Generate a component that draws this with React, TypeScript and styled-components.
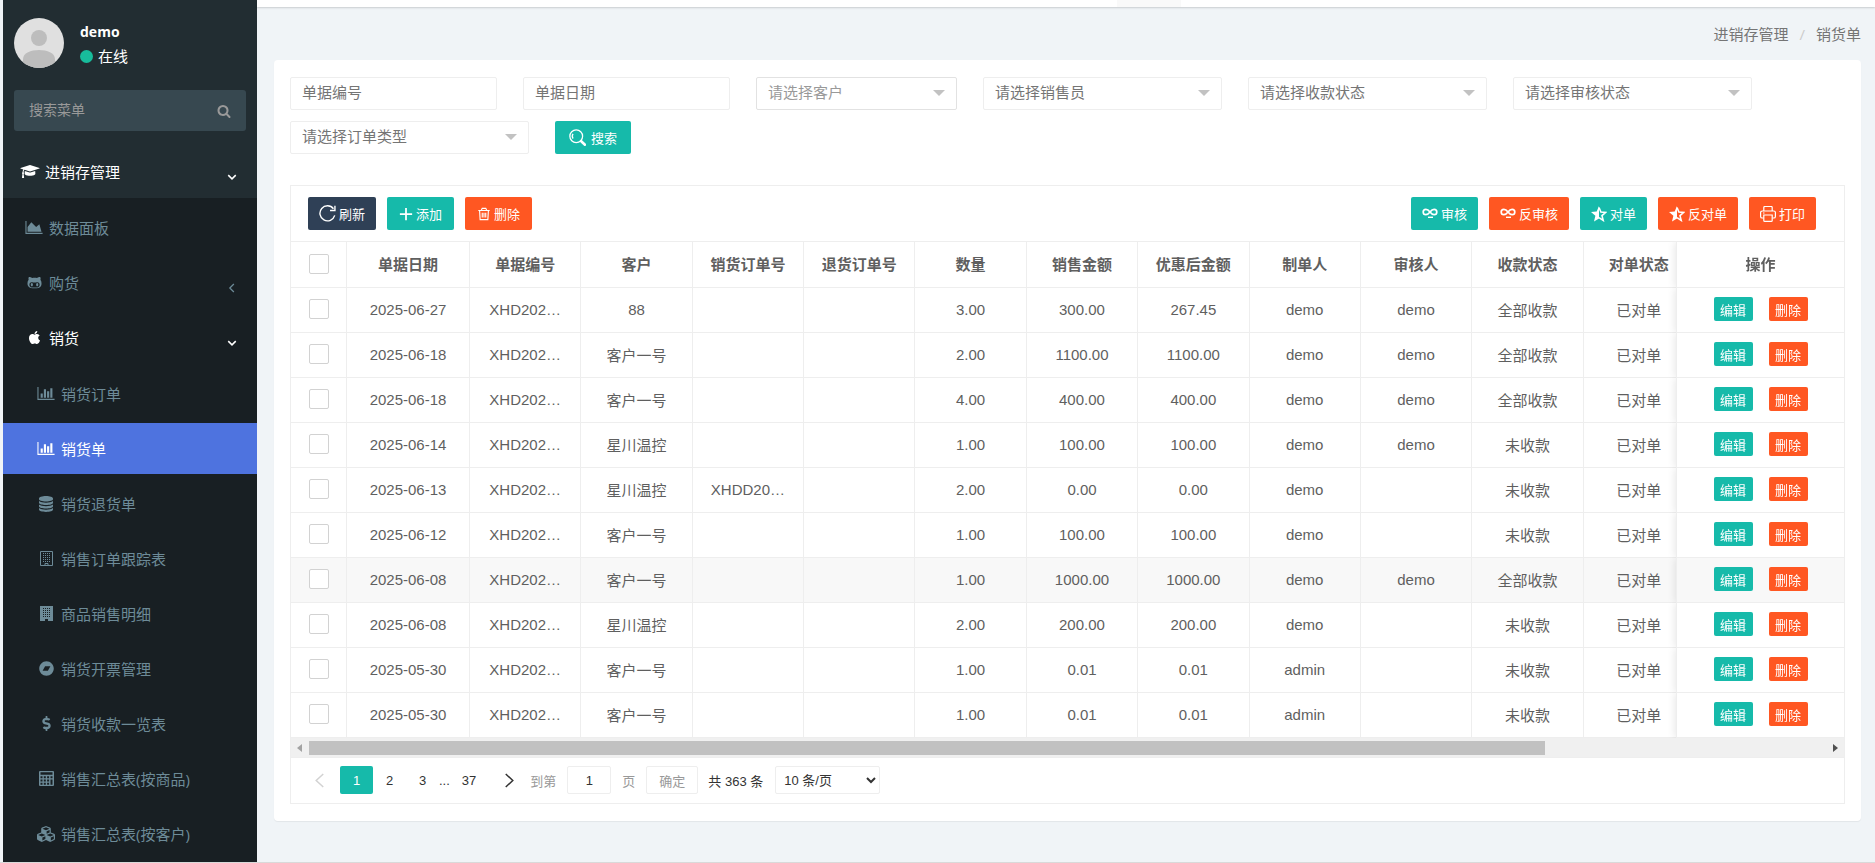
import React from "react";
import styled, { createGlobalStyle, css } from "styled-components";
import { FaApple, FaBandcamp, FaCubes, FaDollarSign, FaGithubAlt } from "react-icons/fa";

const cjk = `"Noto Sans CJK SC", sans-serif`;
const uiFont = `"Open Sans", ${cjk}`;
const dataFont = `"Liberation Sans", ${cjk}`;

const color = {
  teal: "#16baaa",
  orange: "#ff5722",
  navy: "#2f4056",
  line: "#eeeeee",
  text: "#5f5f5f",
  muted: "#757575",
};

const GlobalStyle = createGlobalStyle`
  *, *::before, *::after { box-sizing: border-box; }
  body { margin: 0; background: #f0f4f7; font-family: ${dataFont}; font-size: 15px; color: ${color.text}; }
  button, input, select { font: inherit; margin: 0; }
  a { color: inherit; text-decoration: none; }
`;

/* ---------- page frame ---------- */

const Shell = styled.div`
  display: flex;
  min-height: 100vh;
  padding-left: 3px;
  border-bottom: 1px solid #d9d9d9;
`;

const Sidebar = styled.aside`
  display: flex;
  flex-direction: column;
  flex: 0 0 254px;
  background: #222d32;
  color: #fff;
  font-family: ${uiFont};
`;

const Main = styled.main`
  flex: 1;
  min-width: 0;
`;

const TopStrip = styled.div`
  display: flex;
  height: 7px;
  padding-left: 860px;
  background: #fff;
  box-shadow: 0 1px 2px rgba(0, 0, 0, 0.16);
`;

const TopTab = styled.span`
  width: 64px;
  background: #f9f9f9;
`;

/* ---------- sidebar ---------- */

const UserPanel = styled.div`
  display: flex;
  gap: 16px;
  padding: 18px 11px 22px;
`;

const UserInfo = styled.div`
  display: flex;
  flex-direction: column;
  gap: 4px;
  padding-top: 4px;
  line-height: 20px;
`;

const UserName = styled.strong`
  font-size: 14px;
`;

const Status = styled.span`
  display: flex;
  align-items: center;
  gap: 5px;
  font-size: 15px;
  &::before {
    content: "";
    width: 13px;
    height: 13px;
    border-radius: 50%;
    background: #18bc9c;
  }
`;

const MenuSearch = styled.form`
  display: flex;
  align-items: center;
  height: 41px;
  margin: 0 11px 16px;
  padding: 0 15px;
  border-radius: 3px;
  background: #374850;
`;

const MenuSearchInput = styled.input`
  flex: 1;
  min-width: 0;
  padding: 0 0 2px;
  border: 0;
  outline: 0;
  background: none;
  color: #fff;
  font-size: 14px;
  &::placeholder { color: #999; }
`;

const IconButton = styled.button`
  display: flex;
  padding: 0;
  border: 0;
  background: none;
  color: #999;
`;

const SubMenu = styled.ul`
  display: flex;
  flex: 1;
  flex-direction: column;
  gap: 4px;
  margin: 0;
  padding: 5px 0 0;
  list-style: none;
  background: #181f23;
`;

const MenuLink = styled.a<{ $level?: number; $tone?: "open" | "active" }>`
  display: flex;
  align-items: center;
  gap: 5px;
  height: 51px;
  padding: 0 20px ${(p) => (p.$level === 2 ? 0 : 2)}px ${(p) => [17, 21, 33][p.$level ?? 0]}px;
  color: ${(p) => (p.$tone ? "#fff" : "#6d8b98")};
  background: ${(p) => (p.$tone === "active" ? "#4e73df" : "transparent")};
  font-size: 15px;
  line-height: 20px;
`;

const MenuIcon = styled.span`
  display: flex;
  justify-content: center;
  width: 20px;
`;

const MenuArrow = styled.span`
  display: flex;
  margin-left: auto;
  padding-top: 10px;
`;

/* ---------- content ---------- */

const Breadcrumb = styled.nav`
  display: flex;
  justify-content: flex-end;
  align-items: center;
  gap: 11px;
  height: 53px;
  padding: 0 14px;
  color: ${color.muted};
  font-family: ${uiFont};
`;

const Slash = styled.span`
  color: #ccc;
`;

const Card = styled.section`
  margin: 0 14px 0 17px;
  padding: 17px 16px;
  border-radius: 4px;
  background: #fff;
  box-shadow: 0 1px 1px rgba(0, 0, 0, 0.06);
`;

const Filters = styled.form`
  display: flex;
  flex-wrap: wrap;
  gap: 11px 26px;
  margin-bottom: 31px;
`;

const field = css`
  height: 33px;
  padding: 0 11px 2px;
  border: 1px solid ${color.line};
  border-radius: 2px;
  background: #fff;
  outline: 0;
`;

const FilterInput = styled.input`
  ${field}
  width: 207px;
  &::placeholder { color: ${color.muted}; }
`;

const SelectWrap = styled.span<{ $narrow?: boolean }>`
  position: relative;
  width: ${(p) => (p.$narrow ? 201 : 239)}px;
  &::after {
    content: "";
    position: absolute;
    top: 13px;
    right: 12px;
    border: 6px solid transparent;
    border-top-color: #c2c2c2;
    border-bottom: 0;
    pointer-events: none;
  }
`;

const FilterSelect = styled.select<{ $pale?: boolean }>`
  ${field}
  appearance: none;
  width: 100%;
  border-color: ${(p) => (p.$pale ? "#e2e2e2" : color.line)};
  color: ${(p) => (p.$pale ? "#999" : color.muted)};
`;

const Button = styled.button<{ $bg: string; $wide?: boolean }>`
  display: flex;
  align-items: center;
  justify-content: center;
  gap: ${(p) => (p.$wide ? 5 : 3)}px;
  height: 33px;
  min-width: 67px;
  padding: 0 ${(p) => (p.$wide ? 14 : 11)}px;
  border: 0;
  border-radius: 2px;
  background: ${(p) => p.$bg};
  color: #fff;
  font-size: 13px;
  white-space: nowrap;
`;

const TableFrame = styled.div`
  border: 1px solid ${color.line};
`;

const Toolbar = styled.div`
  display: flex;
  justify-content: space-between;
  padding: 11px 28px 11px 17px;
  border-bottom: 1px solid ${color.line};
`;

const ButtonGroup = styled.div`
  display: flex;
  gap: 11px;
`;

const TableScroll = styled.div`
  overflow: hidden;
`;

const Table = styled.table`
  width: 100%;
  min-width: 1572px;
  table-layout: fixed;
  border-collapse: separate;
  border-spacing: 0;
`;

const Col = styled.col<{ $w?: number }>`
  width: ${(p) => (p.$w ? `${p.$w}px` : "auto")};
`;

const cell = css<{ $pinned?: boolean }>`
  padding: 0 16px 2px;
  border-right: 1px solid ${color.line};
  border-bottom: 1px solid ${color.line};
  background: inherit;
  text-align: center;
  white-space: nowrap;
  ${(p) =>
    p.$pinned &&
    css`
      position: sticky;
      right: 0;
      border-left: 1px solid ${color.line};
      border-right: 0;
      box-shadow: -1px 0 8px rgba(0, 0, 0, 0.1);
      clip-path: inset(0 0 0 -10px);
    `}
`;

const Th = styled.th<{ $pinned?: boolean }>`
  ${cell}
  height: 46px;
  font-weight: 700;
`;

const Td = styled.td<{ $pinned?: boolean }>`
  ${cell}
  height: 45px;
`;

const Tr = styled.tr<{ $hover?: boolean }>`
  background: ${(p) => (p.$hover ? "#f8f8f8" : "#fff")};
`;

const Checkbox = styled.input.attrs({ type: "checkbox" })`
  appearance: none;
  display: block;
  width: 20px;
  height: 20px;
  margin: 0 auto;
  border: 1px solid #d2d2d2;
  border-radius: 2px;
  background: #fff;
`;

const RowActions = styled.div`
  display: flex;
  justify-content: center;
  gap: 16px;
`;

const SmallButton = styled.button<{ $bg: string }>`
  width: 39px;
  height: 24px;
  padding: 0;
  border: 0;
  border-radius: 2px;
  background: ${(p) => p.$bg};
  color: #fff;
  font-size: 13px;
`;

const ScrollBar = styled.div`
  display: flex;
  align-items: center;
  gap: 7px;
  height: 20px;
  padding: 0 6px;
  border-bottom: 1px solid ${color.line};
  background: #f0f0f0;
`;

const ScrollTrack = styled.div`
  flex: 1;
`;

const ScrollThumb = styled.div`
  width: calc(100% - 281px);
  height: 14px;
  background: #c1c1c1;
`;

const ScrollArrow = styled.span<{ $dir: "left" | "right" }>`
  border: 4px solid transparent;
  ${(p) =>
    p.$dir === "left"
      ? "border-right: 5px solid #a3a3a3; border-left: 0;"
      : "border-left: 5px solid #505050; border-right: 0;"}
`;

const Pager = styled.nav`
  display: flex;
  align-items: center;
  padding: 8px 7px 9px;
  color: #333;
  font-size: 13px;
`;

const PageButton = styled.button<{ $current?: boolean; $arrow?: boolean; $off?: boolean }>`
  display: flex;
  align-items: center;
  justify-content: center;
  height: 28px;
  min-width: ${(p) => (p.$arrow ? 42 : 33)}px;
  padding: 0 12px;
  border: 0;
  border-radius: 2px;
  background: ${(p) => (p.$current ? color.teal : "none")};
  color: ${(p) => (p.$current ? "#fff" : p.$off ? "#d2d2d2" : "#333")};
`;

const PagerHint = styled.label`
  display: flex;
  align-items: center;
  gap: 11px;
  color: #999;
`;

const PagerInput = styled.input`
  width: 44px;
  height: 28px;
  padding: 0;
  border: 1px solid ${color.line};
  border-radius: 2px;
  color: #333;
  text-align: center;
`;

const PagerConfirm = styled.button`
  height: 28px;
  margin: 0 10px 0 11px;
  padding: 0 12px;
  border: 1px solid ${color.line};
  border-radius: 2px;
  background: #fff;
  color: #999;
`;

const PagerSelect = styled.select`
  width: 105px;
  height: 28px;
  margin-left: 12px;
  padding: 0 4px;
  border: 1px solid ${color.line};
  border-radius: 2px;
  background: #fff;
  color: #333;
`;

/* ---------- icons ---------- */

const Avatar = () => (
  <svg width="50" height="50" viewBox="0 0 50 50" role="img" aria-label="demo">
    <defs>
      <clipPath id="avatar-clip"><circle cx="25" cy="25" r="25" /></clipPath>
    </defs>
    <g clipPath="url(#avatar-clip)">
      <rect width="50" height="50" fill="#e0e0e0" />
      <circle cx="25" cy="20" r="8" fill="#bdbdbd" />
      <path d="M9 50V41c0-6 8-9 16-9s16 3 16 9v9z" fill="#bdbdbd" />
    </g>
  </svg>
);

const Glyph = ({ w, h, box, d }: { w: number; h: number; box: string; d: string }) => (
  <svg width={w} height={h} viewBox={box} fill="currentColor" aria-hidden="true">
    <path d={d} />
  </svg>
);

const SearchGlyph = () => (
  <Glyph w={14} h={14} box="0 0 1792 1792" d="M1216 832q0-185-131.5-316.5t-316.5-131.5-316.5 131.5-131.5 316.5 131.5 316.5 316.5 131.5 316.5-131.5 131.5-316.5zm512 832q0 52-38 90t-90 38q-54 0-90-38l-343-342q-179 124-399 124-143 0-273.5-55.5t-225-150-150-225-55.5-273.5 55.5-273.5 150-225 225-150 273.5-55.5 273.5 55.5 225 150 150 225 55.5 273.5q0 220-124 399l343 343q37 37 37 90z" />
);
const CapGlyph = () => (
  <Glyph w={20} h={15} box="0 0 2304 1792" d="M1774 836l18 316q4 69-82 128t-235 93.5-323 34.5-323-34.5-235-93.5-82-128l18-316 574 181q22 7 48 7t48-7zm530-324q0 23-22 31l-1120 352q-4 1-10 1t-10-1l-652-206q-43 34-71 111.5t-34 178.5q63 36 63 109 0 69-58 107l58 433q2 14-8 25-9 11-24 11h-192q-15 0-24-11-10-11-8-25l58-433q-58-38-58-107 0-73 65-111 11-207 98-330l-333-104q-22-8-22-31t22-31l1120-352q4-1 10-1t10 1l1120 352q22 8 22 31z" />
);
const AreaGlyph = () => (
  <Glyph w={18} h={15} box="0 0 2048 1792" d="M2048 1536v128h-2048v-1536h128v1408h1920zm-384-1024l256 896h-1664v-576l448-576 576 576z" />
);
const BarGlyph = () => (
  <Glyph w={18} h={15} box="0 0 2048 1792" d="M640 896v512h-256v-512h256zm384-512v1024h-256v-1024h256zm1024 1152v128h-2048v-1536h128v1408h1920zm-640-896v768h-256v-768h256zm384-384v1152h-256v-1152h256z" />
);
const DatabaseGlyph = () => (
  <Glyph w={14} h={16} box="0 0 14 16" d="M0 2.4C0 1 3 0 7 0s7 1 7 2.4v.9C14 4.600 11 5.500 7 5.500S0 4.600 0 3.300zM0 5c1.500 1.200 4 1.700 7 1.700S12.500 6.200 14 5v1.700C14 8 11 9 7 9S0 8 0 6.700zm0 3.500c1.500 1.200 4 1.700 7 1.700s5.500-.5 7-1.700v1.700c0 1.300-3 2.300-7 2.300s-7-1-7-2.300zM0 12c1.500 1.200 4 1.700 7 1.700s5.500-.5 7-1.700v1.600C14 15 11 16 7 16s-7-1-7-2.400z" />
);

const windows = (fill: string) =>
  [3, 5, 7, 9].flatMap((x) =>
    [2, 4, 6, 8, 10].map((y) => <rect key={`${x}-${y}`} x={x} y={y} width="1" height="1" fill={fill} />),
  );

const BuildingOutline = () => (
  <svg width="13" height="15" viewBox="0 0 13 15" aria-hidden="true">
    <path d="M.5.5h12v14H.5zM5 14.500v-2h3v2" fill="none" stroke="currentColor" />
    {windows("currentColor")}
  </svg>
);
const BuildingSolid = () => (
  <svg width="13" height="15" viewBox="0 0 13 15" aria-hidden="true">
    <path d="M0 0h13v15H8v-2H5v2H0z" fill="currentColor" />
    {windows("#181f23")}
  </svg>
);
const CalculatorGlyph = () => (
  <Glyph w={15} h={15} box="0 0 15 15" d="M1 0h13a1 1 0 0 1 1 1v13a1 1 0 0 1-1 1H1a1 1 0 0 1-1-1V1a1 1 0 0 1 1-1zm.5 1.200v2.600h12V1.200zm0 4v2h2v-2zm3.300 0v2h2v-2zm3.300 0v2h2v-2zm3.400 0v2h2v-2zm-10 3.300v2h2v-2zm3.300 0v2h2v-2zm3.300 0v2h2v-2zm3.400 0v5.200h2V8.500zm-10 3.300v1.900h2v-1.900zm3.300 0v1.900h2v-1.900zm3.300 0v1.900h2v-1.900z" />
);

const Stroke = ({ size, w = 1, children }: { size: number; w?: number; children: React.ReactNode }) => (
  <svg width={size} height={size} viewBox="0 0 16 16" fill="none" stroke="currentColor" strokeWidth={w} aria-hidden="true">
    {children}
  </svg>
);

const ChevronDown = () => (
  <Stroke size={10} w={2.4}><path d="M2 5l6 6 6-6" /></Stroke>
);
const ChevronLeft = () => (
  <Stroke size={10} w={2}><path d="M11 1.500L4.500 8l6.500 6.500" /></Stroke>
);
const FindIcon = () => (
  <Stroke size={17} w={1.2}>
    <circle cx="6.800" cy="6.800" r="6" />
    <path d="M3.800 9a4 4 0 0 1 0-4.500" />
    <path d="M11.500 11.500l3.500 3.300" strokeWidth="2.400" strokeLinecap="round" />
  </Stroke>
);
const RefreshIcon = () => (
  <Stroke size={17} w={1.3}>
    <path d="M14.800 9.800A7.100 7.100 0 1 1 13.600 3.500" />
    <path d="M15 .8v4.400h-4.600" />
  </Stroke>
);
const PlusIcon = () => (
  <Stroke size={14} w={2}><path d="M8 1v14M1 8h14" /></Stroke>
);
const TrashIcon = () => (
  <Stroke size={14} w={1.3}>
    <path d="M1.500 4h13M5 3.500L6 1.500h4l1 2M3 4.500l.6 10h8.800l.6-10M6 6.500v5.500M8 6.500v5.500M10 6.500v5.500" />
  </Stroke>
);
const AuditIcon = () => (
  <Stroke size={16} w={1.7}>
    <path d="M8 6C6.500 4 5.500 3.300 3.900 3.300a2.700 2.700 0 0 0 0 5.400C5.500 8.700 6.500 8 8 6s2.500-2.700 4.100-2.700a2.700 2.700 0 0 1 0 5.400C10.500 8.700 9.500 8 8 6z" />
    <path d="M6 11.300h5" strokeWidth="1.400" />
  </Stroke>
);
const HalfStarIcon = () => (
  <svg width="16" height="16" viewBox="0 0 16 16" fill="currentColor" aria-hidden="true">
    <path d="M8 0v12.400L3 15.600l1.400-5.800L0 6l5.700-.5z" />
    <path d="M8 1.500l1.900 4.600 4.700.4L11 9.600l1.200 4.800L8 11.700" fill="none" stroke="currentColor" strokeWidth="1.600" />
  </svg>
);
const PrintIcon = () => (
  <Stroke size={16} w={1.2}>
    <path d="M3.800 5V1.500a1 1 0 0 1 1-1h6.400a1 1 0 0 1 1 1V5" />
    <path d="M3.500 12H2.200A1.600 1.600 0 0 1 .6 10.400V6.600A1.600 1.600 0 0 1 2.200 5h11.600a1.600 1.600 0 0 1 1.600 1.600v3.800a1.600 1.600 0 0 1-1.600 1.600h-1.300" />
    <path d="M3.800 9h8.400v5.400a1 1 0 0 1-1 1H4.800a1 1 0 0 1-1-1zM3 7h1.500" />
  </Stroke>
);
const PageArrow = ({ next }: { next?: boolean }) => (
  <Stroke size={15} w={1.6}><path d={next ? "M4 1l7.500 7L4 15" : "M12 1L4.500 8l7.500 7"} /></Stroke>
);

/* ---------- data ---------- */

type MenuItem = { label: string; icon: React.ReactNode; level: number; tone?: "open" | "active"; arrow?: React.ReactNode };

const menu: MenuItem[] = [
  { label: "数据面板", icon: <AreaGlyph />, level: 1 },
  { label: "购货", icon: <FaGithubAlt size={15} />, level: 1, arrow: <ChevronLeft /> },
  { label: "销货", icon: <FaApple size={15} />, level: 1, tone: "open", arrow: <ChevronDown /> },
  { label: "销货订单", icon: <BarGlyph />, level: 2 },
  { label: "销货单", icon: <BarGlyph />, level: 2, tone: "active" },
  { label: "销货退货单", icon: <DatabaseGlyph />, level: 2 },
  { label: "销售订单跟踪表", icon: <BuildingOutline />, level: 2 },
  { label: "商品销售明细", icon: <BuildingSolid />, level: 2 },
  { label: "销货开票管理", icon: <FaBandcamp size={15} />, level: 2 },
  { label: "销货收款一览表", icon: <FaDollarSign size={15} />, level: 2 },
  { label: "销售汇总表(按商品)", icon: <CalculatorGlyph />, level: 2 },
  { label: "销售汇总表(按客户)", icon: <FaCubes size={18} />, level: 2 },
];

const columns = ["单据日期", "单据编号", "客户", "销货订单号", "退货订单号", "数量", "销售金额", "优惠后金额", "制单人", "审核人", "收款状态", "对单状态"];

const makeRow = (date: string, customer: string, order: string, qty: string, amount: string, net: string, maker: string, auditor: string, paid: string) => [
  date, "XHD202…", customer, order, "", qty, amount, net, maker, auditor, paid, "已对单",
];

const rows = [
  makeRow("2025-06-27", "88", "", "3.00", "300.00", "267.45", "demo", "demo", "全部收款"),
  makeRow("2025-06-18", "客户一号", "", "2.00", "1100.00", "1100.00", "demo", "demo", "全部收款"),
  makeRow("2025-06-18", "客户一号", "", "4.00", "400.00", "400.00", "demo", "demo", "全部收款"),
  makeRow("2025-06-14", "星川温控", "", "1.00", "100.00", "100.00", "demo", "demo", "未收款"),
  makeRow("2025-06-13", "星川温控", "XHDD20…", "2.00", "0.00", "0.00", "demo", "", "未收款"),
  makeRow("2025-06-12", "客户一号", "", "1.00", "100.00", "100.00", "demo", "", "未收款"),
  makeRow("2025-06-08", "客户一号", "", "1.00", "1000.00", "1000.00", "demo", "demo", "全部收款"),
  makeRow("2025-06-08", "星川温控", "", "2.00", "200.00", "200.00", "demo", "", "未收款"),
  makeRow("2025-05-30", "客户一号", "", "1.00", "0.01", "0.01", "admin", "", "未收款"),
  makeRow("2025-05-30", "客户一号", "", "1.00", "0.01", "0.01", "admin", "", "未收款"),
];
const hoveredRow = 6;

const FilterPick = ({ label, pale }: { label: string; pale?: boolean }) => (
  <SelectWrap $narrow={pale}>
    <FilterSelect aria-label={label} $pale={pale}>
      <option>{label}</option>
    </FilterSelect>
  </SelectWrap>
);

export default function App() {
  return (
    <>
      <GlobalStyle />
      <Shell lang="zh-CN">
        <Sidebar>
          <UserPanel>
            <Avatar />
            <UserInfo>
              <UserName>demo</UserName>
              <Status>在线</Status>
            </UserInfo>
          </UserPanel>
          <MenuSearch>
            <MenuSearchInput placeholder="搜索菜单" aria-label="搜索菜单" />
            <IconButton type="button" aria-label="搜索"><SearchGlyph /></IconButton>
          </MenuSearch>
          <MenuLink href="#" $tone="open">
            <MenuIcon><CapGlyph /></MenuIcon>
            进销存管理
            <MenuArrow><ChevronDown /></MenuArrow>
          </MenuLink>
          <SubMenu>
            {menu.map((m) => (
              <li key={m.label}>
                <MenuLink href="#" $level={m.level} $tone={m.tone}>
                  <MenuIcon>{m.icon}</MenuIcon>
                  {m.label}
                  {m.arrow && <MenuArrow>{m.arrow}</MenuArrow>}
                </MenuLink>
              </li>
            ))}
          </SubMenu>
        </Sidebar>

        <Main>
          <TopStrip><TopTab /></TopStrip>
          <Breadcrumb>
            <a href="#">进销存管理</a>
            <Slash>/</Slash>
            <span>销货单</span>
          </Breadcrumb>
          <Card>
            <Filters>
              <FilterInput placeholder="单据编号" aria-label="单据编号" />
              <FilterInput placeholder="单据日期" aria-label="单据日期" />
              <FilterPick label="请选择客户" pale />
              <FilterPick label="请选择销售员" />
              <FilterPick label="请选择收款状态" />
              <FilterPick label="请选择审核状态" />
              <FilterPick label="请选择订单类型" />
              <Button type="button" $bg={color.teal} $wide><FindIcon />搜索</Button>
            </Filters>

            <TableFrame>
              <Toolbar>
                <ButtonGroup>
                  <Button $bg={color.navy}><RefreshIcon />刷新</Button>
                  <Button $bg={color.teal}><PlusIcon />添加</Button>
                  <Button $bg={color.orange}><TrashIcon />删除</Button>
                </ButtonGroup>
                <ButtonGroup>
                  <Button $bg={color.teal}><AuditIcon />审核</Button>
                  <Button $bg={color.orange}><AuditIcon />反审核</Button>
                  <Button $bg={color.teal}><HalfStarIcon />对单</Button>
                  <Button $bg={color.orange}><HalfStarIcon />反对单</Button>
                  <Button $bg={color.orange}><PrintIcon />打印</Button>
                </ButtonGroup>
              </Toolbar>

              <TableScroll>
                <Table>
                  <colgroup>
                    <Col $w={56} />
                    <Col $w={123} />
                    {columns.slice(1).map((c) => <Col key={c} />)}
                    <Col $w={168} />
                  </colgroup>
                  <thead>
                    <Tr>
                      <Th><Checkbox aria-label="全选" /></Th>
                      {columns.map((c) => <Th key={c}>{c}</Th>)}
                      <Th $pinned>操作</Th>
                    </Tr>
                  </thead>
                  <tbody>
                    {rows.map((r, i) => (
                      <Tr key={i} $hover={i === hoveredRow}>
                        <Td><Checkbox aria-label={r[0]} /></Td>
                        {r.map((v, j) => <Td key={j}>{v}</Td>)}
                        <Td $pinned>
                          <RowActions>
                            <SmallButton $bg={color.teal}>编辑</SmallButton>
                            <SmallButton $bg={color.orange}>删除</SmallButton>
                          </RowActions>
                        </Td>
                      </Tr>
                    ))}
                  </tbody>
                </Table>
              </TableScroll>
              <ScrollBar>
                <ScrollArrow $dir="left" />
                <ScrollTrack><ScrollThumb /></ScrollTrack>
                <ScrollArrow $dir="right" />
              </ScrollBar>

              <Pager>
                <PageButton $arrow $off aria-label="上一页"><PageArrow /></PageButton>
                <PageButton $current>1</PageButton>
                <PageButton>2</PageButton>
                <PageButton>3</PageButton>
                <span>...</span>
                <PageButton>37</PageButton>
                <PageButton $arrow aria-label="下一页"><PageArrow next /></PageButton>
                <PagerHint>到第<PagerInput defaultValue="1" />页</PagerHint>
                <PagerConfirm>确定</PagerConfirm>
                <span>共 363 条</span>
                <PagerSelect aria-label="每页条数"><option>10 条/页</option></PagerSelect>
              </Pager>
            </TableFrame>
          </Card>
        </Main>
      </Shell>
    </>
  );
}
